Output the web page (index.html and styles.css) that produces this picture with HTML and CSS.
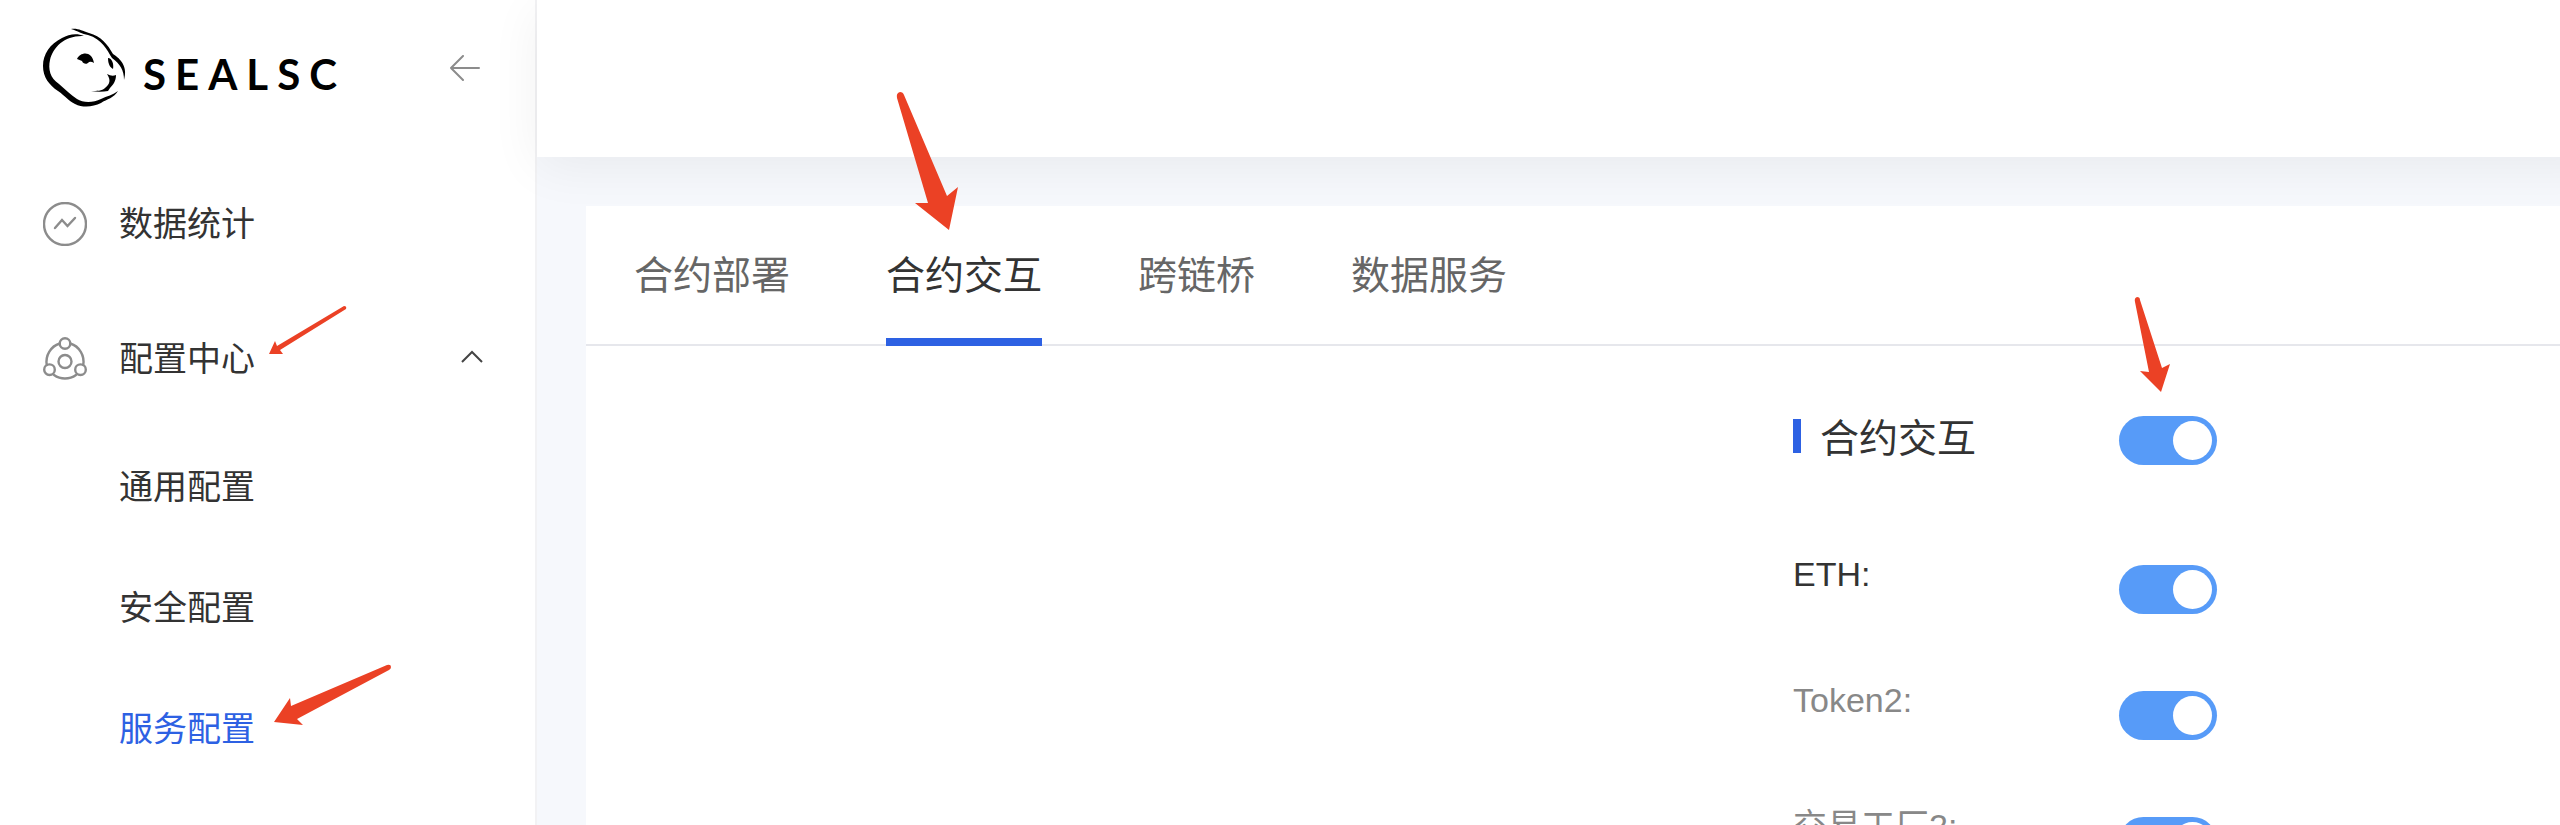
FILE: index.html
```html
<!DOCTYPE html>
<html lang="zh-CN">
<head>
<meta charset="utf-8">
<title>SEALSC</title>
<link rel="stylesheet" href="styles.css">
</head>
<body>
<div class="app">
  <aside class="sidebar">
    <div class="brand">
      <a class="logo" href="#">
        <svg class="logo-mark" viewBox="42 27 86 82" aria-hidden="true">
          <path d="M84 36C77 33 69 34 62 38C50 44 43 54 43 66C43 77 49 85 58 91C65 96 69 101 75 104C83 108 93 107 101 103C107 99 114 98 118 91C113 95 107 96 101 99C93 103 83 103 77 99C71 95 65 89 59 84C50 78 48 69 50 60C53 47 65 35 84 36Z"/>
          <path d="M71 29C78 28 82 31 89 33C101 36 108 45 113 54C121 59 128 67 124 80C124 70 120 64 112 58C107 50 102 39 88 35C82 34 78 31 71 29Z"/>
          <path d="M77 59C80 52 92 50 94 63Q91 61 89 62C87 65 83 64 82 61Z"/>
          <path d="M108 58C112 58 114 64 113 69C109 67 108 62 108 58Z"/>
          <path d="M107 74Q112 77 116 75C116 81 113 85 110 88L108 91C103 92 97 92 91 91C97 91 102 91 105 88C110 84 111 80 107 74Z"/>
        </svg>
        <span class="logo-text">SEALSC</span>
      </a>
      <button class="collapse" type="button" aria-label="收起菜单">
        <svg viewBox="0 0 30 26" width="30" height="26" fill="none" stroke="#8c8c8c" stroke-width="2" stroke-linecap="round" stroke-linejoin="round" aria-hidden="true"><path d="M13 1L1 13L13 25M1 13H29"/></svg>
      </button>
    </div>
    <nav class="menu">
      <a class="menu-item" href="#">
        <svg class="menu-icon" viewBox="0 0 44 44" aria-hidden="true"><circle cx="22" cy="22" r="21"/><path d="M12 26L19 18L24.500 24L32 16"/></svg>
        <span>数据统计</span>
      </a>
      <a class="menu-item" href="#">
        <svg class="menu-icon" viewBox="0 0 44 44" aria-hidden="true"><circle cx="22" cy="24.500" r="6.500"/><circle cx="22" cy="6.500" r="5.300"/><circle cx="6.500" cy="32.700" r="5.300"/><circle cx="37.500" cy="32.700" r="5.300"/><path d="M16.700 6.500A19 19 0 0 0 3.800 28M27.300 6.500A19 19 0 0 1 40.200 28M11 38A19 19 0 0 0 33 38"/></svg>
        <span class="marked">配置中心
          <svg class="mark mark-center" viewBox="266 306 82 52" width="82" height="52" aria-hidden="true"><path d="M269 356L275 343L277 348L344 308Q347 308 346 311L280 352L283 356Z"/></svg>
        </span>
        <svg class="chevron" viewBox="0 0 22 13" width="22" height="13" fill="none" stroke="#444" stroke-width="2" aria-hidden="true"><path d="M1 12L11 2L21 12"/></svg>
      </a>
      <a class="menu-sub" href="#">通用配置</a>
      <a class="menu-sub" href="#">安全配置</a>
      <a class="menu-sub active" href="#"><span class="marked">服务配置
        <svg class="mark mark-service" viewBox="272 664 122 66" width="122" height="66" aria-hidden="true"><path d="M274 724L290 700L291 708L387 667Q391 666 391 669Q391 671 389 672L297 721L303 727Z"/></svg>
      </span></a>
    </nav>
  </aside>
  <div class="main">
    <header class="topbar"></header>
    <main class="content">
      <section class="card">
        <div class="tabs" role="tablist">
          <button class="tab" type="button" role="tab">合约部署</button>
          <button class="tab selected" type="button" role="tab" aria-selected="true">合约交互
            <svg class="mark mark-tab" viewBox="912 90 50 142" width="50" height="142" aria-hidden="true"><path d="M949 230L915 203H928L897 98Q896 93 900 92Q903 92 904 95L947 196L958 187Z"/></svg>
          </button>
          <button class="tab" type="button" role="tab">跨链桥</button>
          <button class="tab" type="button" role="tab">数据服务</button>
        </div>
        <form class="settings">
          <div class="row head">
            <label class="title" for="s0">合约交互</label>
            <span class="marked">
              <input class="switch" type="checkbox" id="s0" checked>
              <svg class="mark mark-switch" viewBox="2130 296 44 100" width="44" height="100" aria-hidden="true"><path d="M2161 393L2140 372L2149 373L2135 303Q2134 299 2137 298Q2140 298 2140 301L2162 369L2170 365Z"/></svg>
            </span>
          </div>
          <div class="row"><label class="dark" for="s1">ETH:</label><input class="switch" type="checkbox" id="s1" checked></div>
          <div class="row"><label for="s2">Token2:</label><input class="switch" type="checkbox" id="s2" checked></div>
          <div class="row"><label for="s3">交易工厂2:</label><input class="switch" type="checkbox" id="s3" checked></div>
        </form>
      </section>
    </main>
  </div>
</div>
</body>
</html>
```
FILE: styles.css
```css
* { box-sizing: border-box; }
body {
  margin: 0;
  background: #f6f8fc;
  color: #333;
  font-family: "Liberation Sans", "Noto Sans CJK SC", sans-serif;
  font-size: 34px;
}
a { color: inherit; text-decoration: none; }
button { padding: 0; border: 0; background: none; color: inherit; font: inherit; cursor: pointer; }
.app { display: flex; height: 100vh; overflow: hidden; }

.sidebar { flex: none; width: 537px; background: #fff; border-right: 2px solid #f2f2f4; }
.brand { display: flex; align-items: center; justify-content: space-between; height: 136px; padding: 0 55px 0 42px; margin-bottom: 18px; }
.logo { display: flex; align-items: center; gap: 15px; }
.logo-mark { width: 86px; height: 82px; fill: #000; }
.logo-text { padding-top: 12px; color: #000; font: 700 42px/50px Lato, sans-serif; letter-spacing: 9px; }
.collapse { display: flex; }
.menu-item { display: flex; align-items: center; height: 135px; padding: 0 52px 0 43px; }
.menu-icon { width: 44px; height: 44px; margin: 4px 32px 0 0; fill: none; stroke: #8c8c8c; stroke-width: 2.4; stroke-linecap: round; }
.chevron { margin-left: auto; }
.menu-sub { display: flex; align-items: center; height: 121px; padding-left: 119px; }
.menu-sub.active { color: #2d61e3; }

.main { flex: 1; display: flex; flex-direction: column; min-width: 0; }
/* The bar runs past the right window edge so that its shadow stays even there */
.topbar { position: relative; z-index: 1; flex: none; height: 157px; margin-right: -48px; background: #fff; box-shadow: 0 10px 48px rgba(0, 0, 0, .06); }
.content { flex: 1; padding: 49px 0 0 49px; }
.card { height: 100%; background: #fff; }
.tabs { display: flex; gap: 96px; height: 140px; padding: 0 48px; border-bottom: 2px solid #e6e7ec; }
.tab { position: relative; margin-bottom: -2px; border-bottom: 8px solid transparent; color: #666; font-size: 39px; white-space: nowrap; }
.tab.selected { border-color: #2d61e3; color: #333; z-index: 2; }

.settings { margin-left: calc(50% + 220px); padding-top: 70px; }
.row { display: flex; align-items: flex-start; margin-bottom: 77px; color: #888; }
.row label { width: 326px; line-height: 18px; }
.row .dark { color: #333; }
.row.head { margin-bottom: 100px; }
.row .title { display: flex; align-items: flex-start; gap: 19px; color: #333; font-size: 39px; line-height: 46px; }
.title::before { content: ""; width: 8px; height: 34px; margin-top: 3px; background: #2d61e3; }
.switch { appearance: none; display: flex; align-items: center; justify-content: flex-end; flex: none; width: 98px; height: 49px; margin: 0; padding: 5px; border-radius: 25px; background: #579bf8; cursor: pointer; }
.switch::before { content: ""; width: 39px; height: 39px; border-radius: 50%; background: #fff; }
.switch:not(:checked) { justify-content: flex-start; background: #ccc; }

/* Red pointers drawn over the page */
.marked { position: relative; }
.mark { position: absolute; z-index: 2; overflow: visible; fill: #eb4125; pointer-events: none; }
.mark-center { left: 147px; top: -28px; }
.mark-service { left: 153px; top: -40px; }
.mark-tab { left: 26px; top: -116px; }
.mark-switch { left: 11px; top: -121px; }
```
